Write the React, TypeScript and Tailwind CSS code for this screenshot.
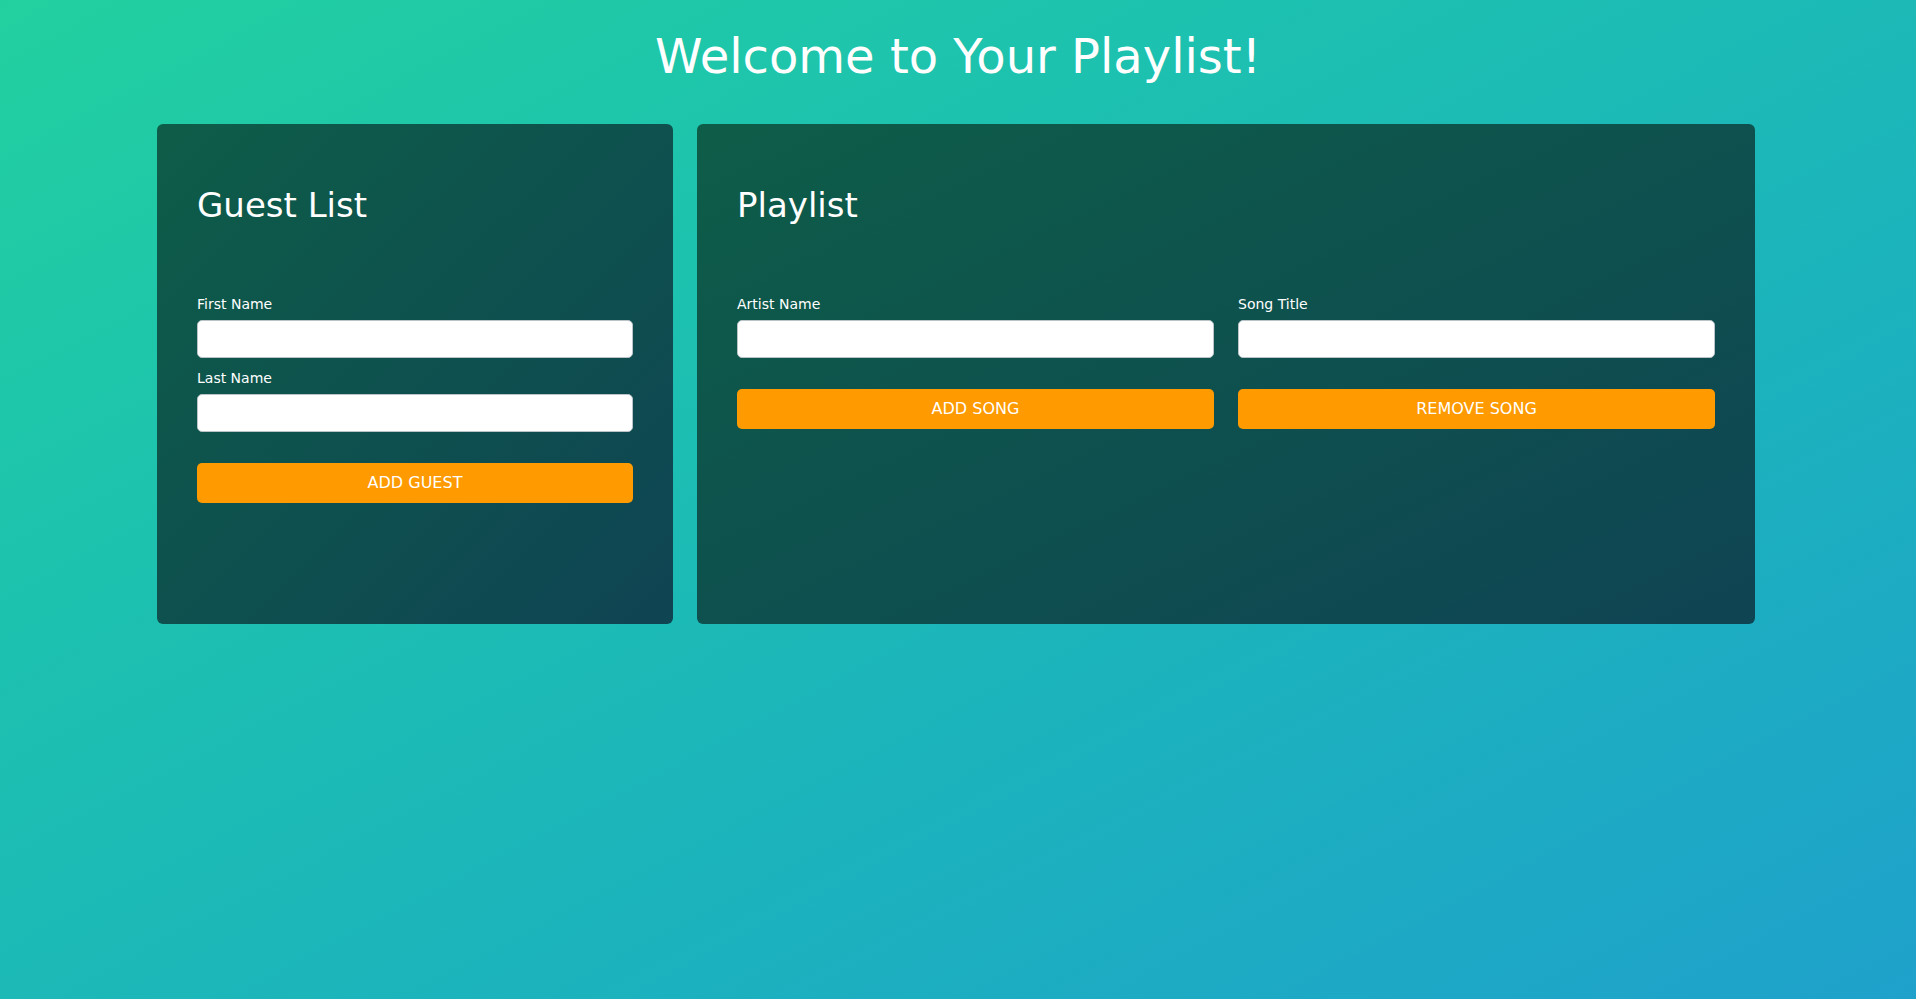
import { useState } from 'react';

function Field({ label, value, onChange }: { label: string; value: string; onChange: (v: string) => void }) {
	return (
		<label className="block">
			<span className="mb-[6px] block text-[14px] leading-[20px] text-white">{label}</span>
			<input
				type="text"
				value={value}
				onChange={(e) => onChange(e.target.value)}
				className="block h-[38px] w-full rounded-[5px] border border-[#b9c3c8] bg-white px-3 text-[15px] text-gray-800 outline-none"
			/>
		</label>
	);
}

function OrangeButton({ children, onClick }: { children: React.ReactNode; onClick?: () => void }) {
	return (
		<button
			type="button"
			onClick={onClick}
			className="h-[40px] w-full rounded-[5px] bg-[#ff9a00] text-[16px] uppercase text-white"
		>
			{children}
		</button>
	);
}

function GuestList() {
	const [first, setFirst] = useState('');
	const [last, setLast] = useState('');

	return (
		<section className="h-[500px] w-[516px] rounded-[6px] bg-linear-to-br from-[#0e5d48] to-[#0f4453] px-10 pt-[61px]">
			<h2 className="text-[34px] leading-[40px] text-white">Guest List</h2>

			<div className="mt-[69px] space-y-[10px]">
				<Field label="First Name" value={first} onChange={setFirst} />
				<Field label="Last Name" value={last} onChange={setLast} />
			</div>

			<div className="mt-[31px]">
				<OrangeButton
					onClick={() => {
						setFirst('');
						setLast('');
					}}
				>
					Add Guest
				</OrangeButton>
			</div>
		</section>
	);
}

function Playlist() {
	const [artist, setArtist] = useState('');
	const [title, setTitle] = useState('');

	return (
		<section className="h-[500px] w-[1058px] rounded-[6px] bg-linear-to-br from-[#0e5d48] to-[#0f4453] px-10 pt-[61px]">
			<h2 className="text-[34px] leading-[40px] text-white">Playlist</h2>

			<div className="mt-[69px] grid grid-cols-2 gap-x-6">
				<Field label="Artist Name" value={artist} onChange={setArtist} />
				<Field label="Song Title" value={title} onChange={setTitle} />
			</div>

			<div className="mt-[31px] grid grid-cols-2 gap-x-6">
				<OrangeButton>Add Song</OrangeButton>
				<OrangeButton>Remove Song</OrangeButton>
			</div>
		</section>
	);
}

export default function App() {
	return (
		<div
			className="min-h-[999px] w-full bg-linear-to-br from-[#22d09f] to-[#1fa1cb] px-[157px] pt-[28px]"
			style={{ fontFamily: '"DejaVu Sans", sans-serif' }}
		>
			<h1 className="text-center text-[48px] leading-[56px] text-white">Welcome to Your Playlist!</h1>

			<div className="mt-[40px] flex gap-6">
				<GuestList />
				<Playlist />
			</div>
		</div>
	);
}
